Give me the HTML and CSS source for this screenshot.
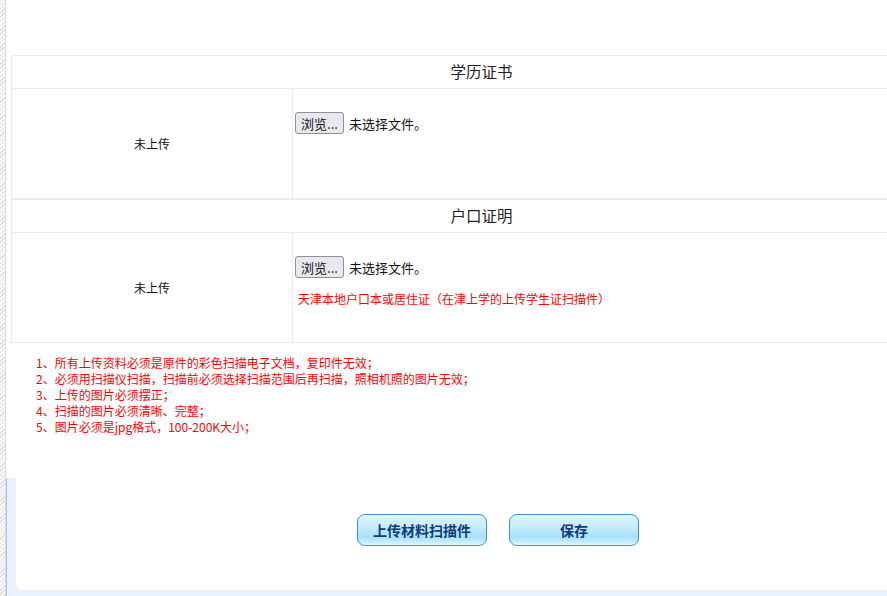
FILE: index.html
```html
<!DOCTYPE html>
<html lang="zh-CN">
<head>
<meta charset="utf-8">
<title>上传材料扫描件</title>
<link rel="stylesheet" href="styles.css">
</head>
<body>
<div class="page">
  <div class="rail"></div>
  <div class="main">
    <section class="upload">
      <div class="block">
        <div class="block-title">学历证书</div>
        <div class="block-row">
          <div class="status">未上传</div>
          <div class="field">
            <div class="file"><span class="file-btn">浏览...</span><span class="file-name">未选择文件。</span></div>
          </div>
        </div>
      </div>
      <div class="block">
        <div class="block-title">户口证明</div>
        <div class="block-row">
          <div class="status">未上传</div>
          <div class="field">
            <div class="file"><span class="file-btn">浏览...</span><span class="file-name">未选择文件。</span></div>
            <p class="hint">天津本地户口本或居住证（在津上学的上传学生证扫描件）</p>
          </div>
        </div>
      </div>
      <ul class="notes">
        <li>1、所有上传资料必须是原件的彩色扫描电子文档，复印件无效；</li>
        <li>2、必须用扫描仪扫描，扫描前必须选择扫描范围后再扫描，照相机照的图片无效；</li>
        <li>3、上传的图片必须摆正；</li>
        <li>4、扫描的图片必须清晰、完整；</li>
        <li>5、图片必须是jpg格式，100-200K大小；</li>
      </ul>
    </section>
    <section class="footer-wrap">
      <div class="footer-panel">
        <button class="action" type="button">上传材料扫描件</button>
        <button class="action" type="button">保存</button>
      </div>
    </section>
  </div>
</div>
</body>
</html>
```
FILE: styles.css
```css
html, body {
  margin: 0;
  padding: 0;
  overflow: hidden;
  background: #fff;
}
body {
  font-family: "Noto Sans CJK SC", "Liberation Sans", sans-serif;
  color: #222;
}
.page {
  display: flex;
  height: 596px;
}
.rail {
  flex: 0 0 5px;
  border-right: 1px solid #dcdcdc;
  background: repeating-linear-gradient(135deg, #dedede 0 1px, #fafafa 1px 3px);
}
.main {
  flex: 1 1 auto;
  display: flex;
  flex-direction: column;
  min-width: 0;
}
.upload {
  height: 478px;
  box-sizing: border-box;
  padding: 55px 0 0 5px;
}
.block {
  border: 1px solid #ebebeb;
  border-right: none;
}
.block-title {
  height: 32px;
  line-height: 31px;
  padding-left: 64px;
  text-align: center;
  font-size: 15.5px;
  color: #222;
  border-bottom: 1px solid #ebebeb;
}
.block-row {
  display: grid;
  grid-template-columns: 281px 1fr;
  height: 109px;
}
.status {
  border-right: 1px solid #ebebeb;
  display: flex;
  align-items: center;
  justify-content: center;
  font-size: 12px;
  color: #111;
}
.field {
  padding: 23px 0 0 2px;
}
.file {
  display: flex;
  align-items: center;
  gap: 5px;
  font-size: 13px;
}
.file-btn {
  display: inline-flex;
  align-items: center;
  justify-content: center;
  box-sizing: border-box;
  width: 49px;
  height: 22px;
  border: 1px solid #8f8f9d;
  border-radius: 3px;
  background: #e9e9ed;
  color: #111;
  font-size: 13px;
}
.file-name {
  color: #111;
}
.hint {
  margin: 13px 0 0 3px;
  font-size: 12px;
  line-height: 16px;
  color: #ff0000;
}
.notes {
  list-style: none;
  margin: 12px 0 0;
  padding: 0 0 0 25px;
  font-size: 12px;
  line-height: 16px;
  color: #ff0000;
}
.footer-wrap {
  flex: 1 1 auto;
  background: #eaf1fe;
  border-left: 1px solid #a9c7f5;
  padding: 0 0 6px 9px;
  display: flex;
}
.footer-panel {
  flex: 1 1 auto;
  background: #fff;
  border-bottom-left-radius: 7px;
  padding: 36px 0 0 341px;
  display: flex;
  align-items: flex-start;
  gap: 22px;
}
.action {
  box-sizing: border-box;
  width: 130px;
  height: 32px;
  margin: 0;
  padding: 0;
  border: 1px solid #3f90d9;
  border-radius: 8px;
  background: linear-gradient(#dff5fe 0%, #c4ecfc 40%, #a9e2f9 75%, #c9eefc 92%, #e6f7fe 100%);
  color: #0f3b7c;
  font-family: "Noto Sans CJK SC", "Liberation Sans", sans-serif;
  font-size: 14px;
  font-weight: bold;
  cursor: pointer;
}
```
